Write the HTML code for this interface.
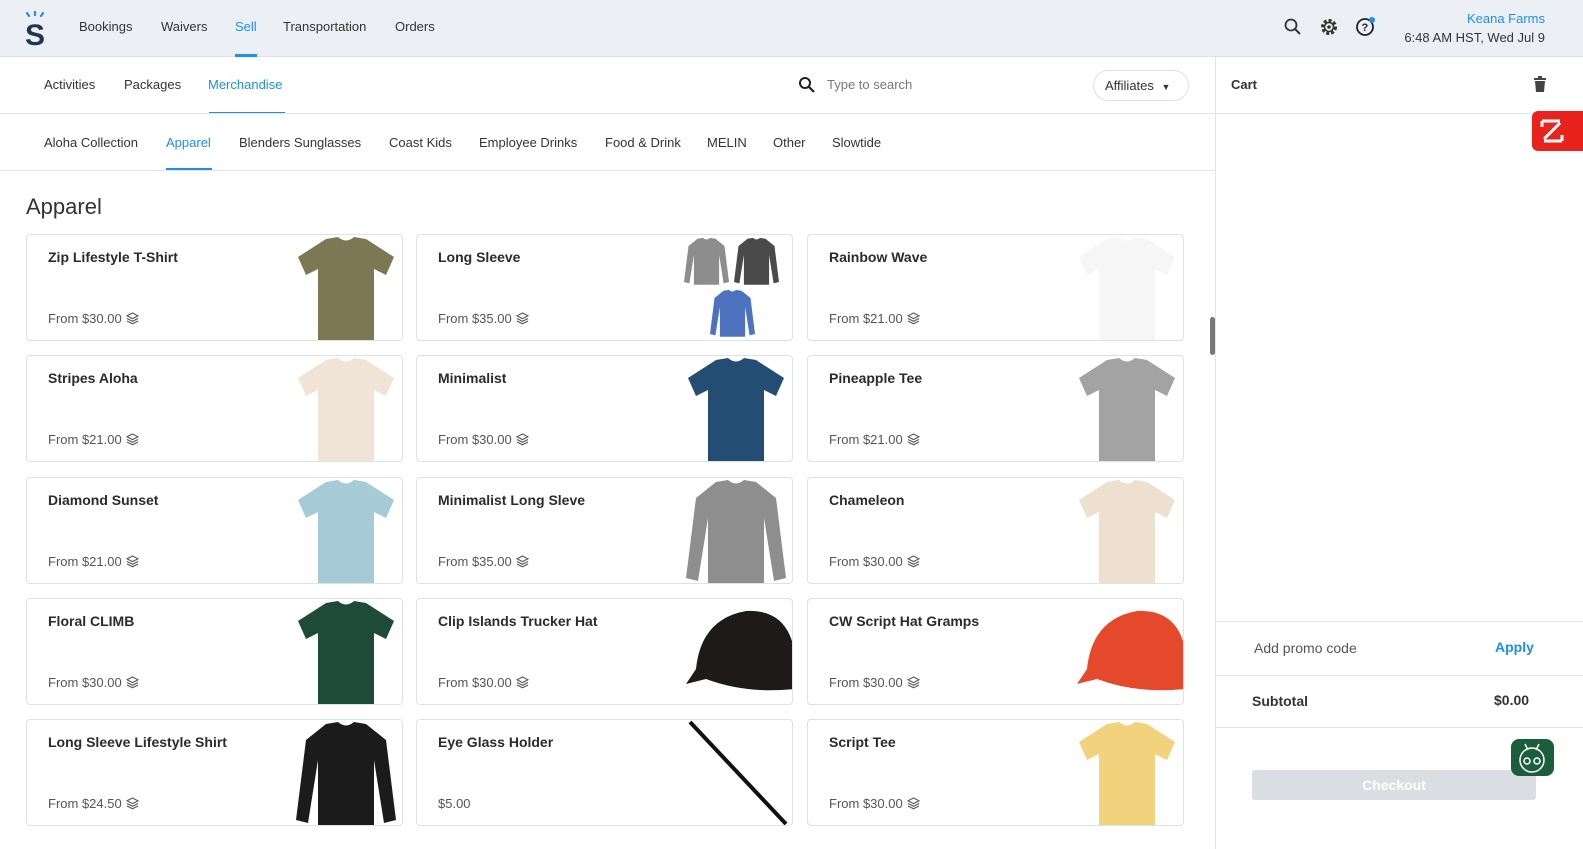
<!DOCTYPE html>
<html><head><meta charset="utf-8"><style>
*{box-sizing:border-box;margin:0;padding:0}
body{width:1583px;height:849px;overflow:hidden;font-family:"Liberation Sans",sans-serif;background:#fff;color:#333;position:relative}
.top{position:absolute;left:0;top:0;width:1583px;height:57px;background:#ecf0f5;border-bottom:1px solid #dde1e6}
.top .nav{position:absolute;top:19px;font-size:13px;color:#333}
.ul{position:absolute;height:3px;background:#1a8fef}
.sub{position:absolute;font-size:13px;color:#333}
.hl{position:absolute;height:1px;background:#e2e4e7}
.card{position:absolute;width:377px;height:107px;border:1px solid #dfe1e4;border-radius:4px;background:#fff;overflow:hidden}
.card b{position:absolute;left:21px;top:14px;font-size:14px;color:#2b2b2b}
.card .p{position:absolute;left:21px;top:76px;font-size:13px;color:#555}
.card svg.img{position:absolute;right:0;top:0}
.lay{display:inline-block;vertical-align:-2px;margin-left:4px}
</style></head><body>
<div class="top">
<svg style="position:absolute;left:24px;top:11px" width="22" height="36" viewBox="0 0 22 36"><g stroke="#1a8fef" stroke-width="2.2" stroke-linecap="round"><line x1="3" y1="2" x2="5" y2="5"/><line x1="11" y1="0.5" x2="11" y2="4"/><line x1="19" y1="2" x2="17" y2="5"/></g><text x="1" y="34" font-family="Liberation Sans" font-weight="bold" font-size="30" fill="#1d3557">S</text></svg>
<span class="nav" style="left:79px">Bookings</span>
<span class="nav" style="left:161px">Waivers</span>
<span class="nav" style="left:235px;color:#1a8fef">Sell</span>
<span class="nav" style="left:283px">Transportation</span>
<span class="nav" style="left:395px">Orders</span>
<div class="ul" style="left:235px;top:54px;width:22px"></div>
<svg style="position:absolute;left:1284px;top:18px" width="18" height="18" viewBox="0 0 18 18"><circle cx="7" cy="7" r="5.5" fill="none" stroke="#333" stroke-width="1.8"/><line x1="11" y1="11" x2="16" y2="16" stroke="#333" stroke-width="2"/></svg>
<svg style="position:absolute;left:1319px;top:17px" width="20" height="20" viewBox="0 0 20 20"><circle cx="10" cy="10" r="6.5" fill="none" stroke="#333" stroke-width="3" stroke-dasharray="3 2"/><circle cx="10" cy="10" r="4.5" fill="none" stroke="#333" stroke-width="1.6"/><circle cx="10" cy="10" r="1.8" fill="#333"/></svg>
<svg style="position:absolute;left:1355px;top:16px" width="22" height="22" viewBox="0 0 22 22"><circle cx="10" cy="11" r="8" fill="none" stroke="#222" stroke-width="1.8"/><text x="6.5" y="15" font-size="11" font-weight="bold" font-family="Liberation Sans" fill="#222">?</text><circle cx="17" cy="4" r="3" fill="#1a8fef"/></svg>
<span style="position:absolute;right:38px;top:11px;font-size:13px;color:#1a8fef">Keana Farms</span>
<span style="position:absolute;right:38px;top:30px;font-size:13px;color:#333">6:48 AM HST, Wed Jul 9</span>
</div>
<!-- sub nav -->
<span class="sub" style="left:44px;top:77px">Activities</span>
<span class="sub" style="left:124px;top:77px">Packages</span>
<span class="sub" style="left:208px;top:77px;color:#1a8fef">Merchandise</span>
<div class="ul" style="left:209px;top:112px;width:76px;height:2px"></div>
<svg style="position:absolute;left:798px;top:76px" width="18" height="18" viewBox="0 0 18 18"><circle cx="7" cy="7" r="5" fill="none" stroke="#222" stroke-width="2"/><line x1="10.5" y1="10.5" x2="16" y2="16" stroke="#222" stroke-width="2.2"/></svg>
<span class="sub" style="left:827px;top:77px;color:#777">Type to search</span>
<div style="position:absolute;left:1093px;top:70px;width:96px;height:31px;border:1px solid #dfe1e4;border-radius:16px;font-size:13px;padding:7px 0 0 11px;color:#333">Affiliates <span style="font-size:9px;margin-left:4px">▼</span></div>
<div class="hl" style="left:0;top:113px;width:1216px"></div>
<span class="sub" style="left:44px;top:135px">Aloha Collection</span>
<span class="sub" style="left:166px;top:135px;color:#1a8fef">Apparel</span>
<div class="ul" style="left:166px;top:168px;width:46px;height:2px"></div>
<span class="sub" style="left:239px;top:135px">Blenders Sunglasses</span>
<span class="sub" style="left:389px;top:135px">Coast Kids</span>
<span class="sub" style="left:479px;top:135px">Employee Drinks</span>
<span class="sub" style="left:605px;top:135px">Food &amp; Drink</span>
<span class="sub" style="left:707px;top:135px">MELIN</span>
<span class="sub" style="left:773px;top:135px">Other</span>
<span class="sub" style="left:832px;top:135px">Slowtide</span>
<div class="hl" style="left:0;top:170px;width:1216px"></div>
<div style="position:absolute;left:26px;top:194px;font-size:22px;color:#333">Apparel</div>
<div style="position:absolute;left:1210px;top:317px;width:5px;height:38px;border-radius:3px;background:#777"></div>
<!-- right panel -->
<div style="position:absolute;left:1215px;top:57px;width:1px;height:792px;background:#e2e4e7"></div>
<span style="position:absolute;left:1231px;top:77px;font-size:13px;font-weight:bold;color:#333">Cart</span>
<svg style="position:absolute;left:1533px;top:76px" width="14" height="17" viewBox="0 0 14 17"><rect x="1" y="2" width="12" height="2" fill="#444"/><rect x="5" y="0" width="4" height="2" fill="#444"/><path d="M2 5h10l-1 11H3z" fill="#444"/></svg>
<div class="hl" style="left:1216px;top:113px;width:367px"></div>
<div style="position:absolute;left:1532px;top:111px;width:51px;height:40px;background:#e8221c;border-radius:6px 0 0 6px"><svg width="40" height="40" viewBox="0 0 40 40"><path d="M10 10h18M28 12L12 28M12 30h18M10 10v6M30 30v-6" stroke="#fff" stroke-width="3" fill="none"/></svg></div>
<div class="hl" style="left:1216px;top:621px;width:367px"></div>
<span style="position:absolute;left:1254px;top:640px;font-size:14px;color:#555">Add promo code</span>
<span style="position:absolute;left:1495px;top:639px;font-size:14px;color:#1a8fef;font-weight:bold">Apply</span>
<div class="hl" style="left:1216px;top:675px;width:367px"></div>
<span style="position:absolute;left:1252px;top:693px;font-size:14px;font-weight:bold;color:#333">Subtotal</span>
<span style="position:absolute;left:1494px;top:692px;font-size:14px;font-weight:bold;color:#333">$0.00</span>
<div class="hl" style="left:1216px;top:727px;width:367px"></div>
<div style="position:absolute;left:1252px;top:770px;width:284px;height:30px;background:#dadee3;border-radius:3px;color:#fff;font-weight:bold;font-size:14px;text-align:center;line-height:30px">Checkout</div>
<div style="position:absolute;left:1511px;top:739px;width:43px;height:37px;background:#1b5e3b;border-radius:8px"><svg width="43" height="37" viewBox="0 0 43 37"><circle cx="21" cy="21" r="12" fill="none" stroke="#fff" stroke-width="1.5"/><circle cx="16" cy="22" r="3" fill="none" stroke="#fff" stroke-width="1.5"/><circle cx="26" cy="22" r="3" fill="none" stroke="#fff" stroke-width="1.5"/><path d="M14 5l3 6M28 5l-3 6" stroke="#fff" stroke-width="1.5"/></svg></div>

<!-- cards -->
<div id="cards"></div>
<script>
const tee="M30 4 L42 2 Q50 9 58 2 L70 4 L98 22 L90 40 L78 34 L78 106 L22 106 L22 34 L10 40 L2 22 Z";
const ls="M30 4 L42 2 Q50 9 58 2 L70 4 L90 20 L100 100 L88 103 L78 40 L78 106 L22 106 L22 40 L12 103 L0 100 L10 20 Z";
const hat="M10 70 Q15 20 60 12 Q100 10 108 50 L108 90 Q60 95 20 80 L0 85 Z";
const items=[
["Zip Lifestyle T-Shirt","From $30.00",tee,"#7d7853",1],
["Long Sleeve","From $35.00","multi","#777",1],
["Rainbow Wave","From $21.00",tee,"#f6f6f6",1],
["Stripes Aloha","From $21.00",tee,"#efe4d6",1],
["Minimalist","From $30.00",tee,"#244d74",1],
["Pineapple Tee","From $21.00",tee,"#a3a3a3",1],
["Diamond Sunset","From $21.00",tee,"#a5cbd6",1],
["Minimalist Long Sleve","From $35.00",ls,"#8e8e8e",1],
["Chameleon","From $30.00",tee,"#ede0ce",1],
["Floral CLIMB","From $30.00",tee,"#1e4a3a",1],
["Clip Islands Trucker Hat","From $30.00",hat,"#1e1a1a",1],
["CW Script Hat Gramps","From $30.00",hat,"#e5492c",1],
["Long Sleeve Lifestyle Shirt","From $24.50",ls,"#1b1b1b",1],
["Eye Glass Holder","$5.00","strap","#111",0],
["Script Tee","From $30.00",tee,"#f3d27d",1]];
const xs=[26,416,807],ys=[234,355,477,598,719];
const lay='<svg class="lay" width="13" height="13" viewBox="0 0 13 13" fill="none" stroke="#555" stroke-width="1.1"><path d="M6.5 1L12 3.8 6.5 6.6 1 3.8z"/><path d="M1 6.5l5.5 2.8L12 6.5"/><path d="M1 9l5.5 2.8L12 9"/></svg>';
let h="";
items.forEach((it,i)=>{const x=xs[i%3],y=ys[Math.floor(i/3)];
let img;
if(it[2]=="multi")img='<svg class="img" width="110" height="107" viewBox="0 0 110 107"><g transform="translate(2,2) scale(.45)"><path d="'+ls+'" fill="#8d8d8d"/></g><g transform="translate(52,2) scale(.45)"><path d="'+ls+'" fill="#4a4a4a"/></g><g transform="translate(28,54) scale(.45)"><path d="'+ls+'" fill="#4f72c0"/></g></svg>';
else if(it[2]=="strap")img='<svg class="img" width="110" height="107" viewBox="0 0 110 107"><line x1="8" y1="2" x2="104" y2="104" stroke="#111" stroke-width="4"/></svg>';
else img='<svg class="img" width="110" height="107" viewBox="0 0 110 107"><path d="'+it[2]+'" fill="'+it[3]+'" transform="translate(4,0)"/></svg>';
h+='<div class="card" style="left:'+x+'px;top:'+y+'px"><b>'+it[0]+'</b><span class="p">'+it[1]+(it[4]?lay:'')+'</span>'+img+'</div>';});
document.getElementById("cards").innerHTML=h;
</script>
</body></html>
